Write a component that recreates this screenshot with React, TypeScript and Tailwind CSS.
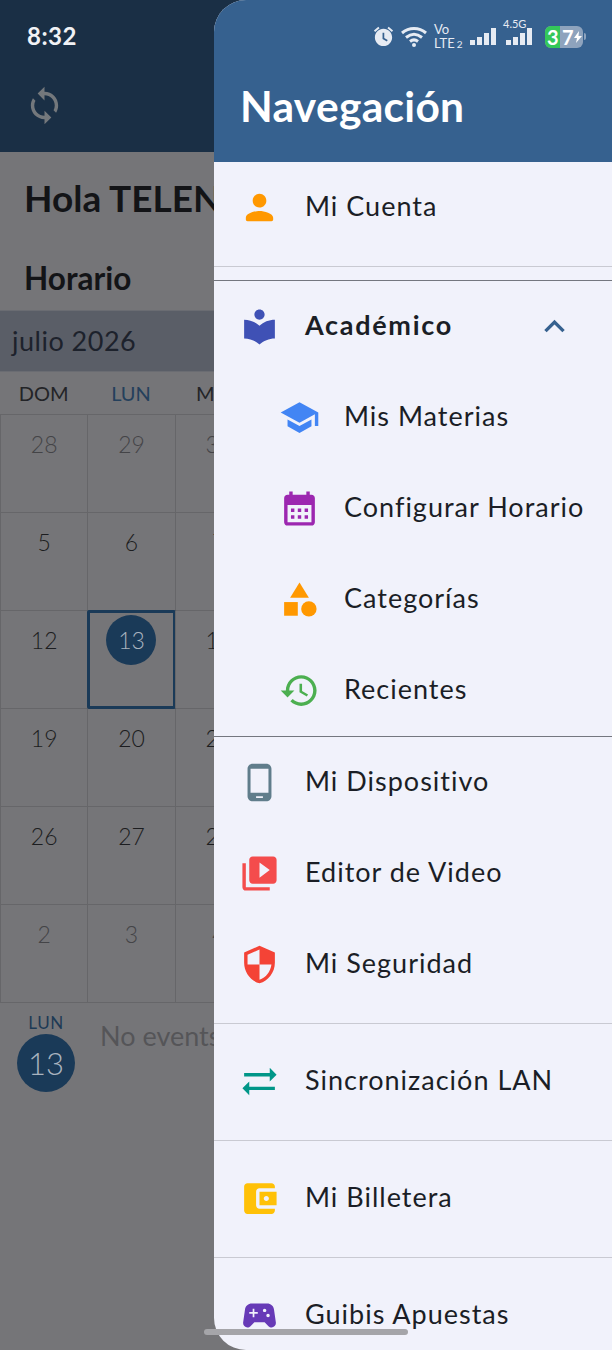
import React from "react";

const FONT = "font-['Lato','Liberation_Sans',sans-serif]";

const Icon = ({ d, color, size = 41, children }: { d?: string; color: string; size?: number; children?: React.ReactNode }) => (
  <svg width={size} height={size} viewBox="0 0 24 24" fill={color} className="shrink-0">
    {d && <path d={d} />}
    {children}
  </svg>
);

const paths = {
  person: "M12 12c2.21 0 4-1.79 4-4s-1.79-4-4-4-4 1.79-4 4 1.79 4 4 4zm0 2c-2.67 0-8 1.34-8 4v1c0 .55.45 1 1 1h14c.55 0 1-.45 1-1v-1c0-2.66-5.33-4-8-4z",
  library: "M12 11.55C9.64 9.35 6.48 8 3 8v11c3.48 0 6.64 1.35 9 3.55 2.36-2.19 5.52-3.55 9-3.55V8c-3.48 0-6.64 1.35-9 3.55zM12 8c1.66 0 3-1.34 3-3s-1.34-3-3-3-3 1.34-3 3 1.34 3 3 3z",
  school: "M5 13.18v4L12 21l7-3.82v-4L12 17l-7-3.82zM12 3L1 9l11 6 9-4.91V17h2V9L12 3z",
  calendar: "M19 4h-1V2h-2v2H8V2H6v2H5c-1.11 0-1.99.9-1.99 2L3 20c0 1.1.89 2 2 2h14c1.1 0 2-.9 2-2V6c0-1.1-.9-2-2-2zm0 16H5V10h14v10zM9 14H7v-2h2v2zm4 0h-2v-2h2v2zm4 0h-2v-2h2v2zm-8 4H7v-2h2v2zm4 0h-2v-2h2v2zm4 0h-2v-2h2v2z",
  history: "M13 3c-4.97 0-9 4.03-9 9H1l3.89 3.89.07.14L9 12H6c0-3.87 3.13-7 7-7s7 3.13 7 7-3.13 7-7 7c-1.93 0-3.68-.79-4.94-2.06l-1.42 1.42C8.27 19.99 10.51 21 13 21c4.97 0 9-4.03 9-9s-4.03-9-9-9zm-1 5v5l4.28 2.54.72-1.21-3.5-2.08V8H12z",
  phone: "M16 1H8C6.34 1 5 2.34 5 4v16c0 1.66 1.34 3 3 3h8c1.66 0 3-1.34 3-3V4c0-1.66-1.34-3-3-3zm-2 20h-4v-1h4v1zm3.25-3H6.75V4h10.5v14z",
  video: "M4 6H2v14c0 1.1.9 2 2 2h14v-2H4V6zm16-4H8c-1.1 0-2 .9-2 2v12c0 1.1.9 2 2 2h12c1.1 0 2-.9 2-2V4c0-1.1-.9-2-2-2zm-8 12.5v-9l6 4.5-6 4.5z",
  security: "M12 1L3 5v6c0 5.55 3.84 10.74 9 12 5.16-1.26 9-6.45 9-12V5l-9-4zm0 10.99h7c-.53 4.12-3.28 7.79-7 8.94V12H5V6.3l7-3.11v8.8z",
  syncAlt: "M22 8l-4-4v3H3v2h15v3zM2 16l4 4v-3h15v-2H6v-3z",
  wallet: "M21 18v1c0 1.1-.9 2-2 2H5c-1.11 0-2-.9-2-2V5c0-1.1.89-2 2-2h14c1.1 0 2 .9 2 2v1h-9c-1.11 0-2 .9-2 2v8c0 1.1.89 2 2 2h9zm-9-2h10V8H12v8zm4-2.5c-.83 0-1.5-.67-1.5-1.5s.67-1.5 1.5-1.5 1.5.67 1.5 1.5-.67 1.5-1.5 1.5z",
  games: "M21.58 16.09l-1.09-7.66C20.21 6.46 18.52 5 16.53 5H7.47C5.48 5 3.79 6.46 3.51 8.43l-1.09 7.66C2.2 17.63 3.39 19 4.94 19c.68 0 1.32-.27 1.8-.75L9 16h6l2.25 2.25c.48.48 1.13.75 1.8.75 1.56 0 2.75-1.37 2.53-2.91zM11 11H9v2H8v-2H6v-1h2V8h1v2h2v1zm4-1c-.55 0-1-.45-1-1s.45-1 1-1 1 .45 1 1-.45 1-1 1zm2 3c-.55 0-1-.45-1-1s.45-1 1-1 1 .45 1 1-.45 1-1 1z",
  sync: "M12 4V1L8 5l4 4V6c3.31 0 6 2.69 6 6 0 1.01-.25 1.97-.7 2.8l1.46 1.46C19.54 15.03 20 13.57 20 12c0-4.42-3.58-8-8-8zm0 14c-3.31 0-6-2.69-6-6 0-1.01.25-1.97.7-2.8L5.24 7.74C4.46 8.97 4 10.43 4 12c0 4.42 3.58 8 8 8v3l4-4-4-4v3z",
  chevron: "M12 8l-6 6 1.41 1.41L12 10.83l4.59 4.58L18 14z",
};

const weeks = [
  [28, 29, 30],
  [5, 6, 7],
  [12, 13, 14],
  [19, 20, 21],
  [26, 27, 28],
  [2, 3, 4],
];

const MenuRow = ({ icon, label, sub, bold }: { icon: React.ReactNode; label: string; sub?: boolean; bold?: boolean }) => (
  <div className={`flex h-[91px] items-center ${sub ? "pl-[65px]" : "pl-[25px]"}`}>
    <div className="flex w-[41px] justify-center">{icon}</div>
    <span
      className={`${sub ? "ml-[24px]" : "ml-[25px]"} -translate-y-px text-[27px] text-[#1b1e26] ${
        bold ? "font-bold tracking-[1.7px]" : "tracking-[1px]"
      }`}
    >
      {label}
    </span>
  </div>
);

const Divider = () => <div className="mb-3 mt-[13px] h-px bg-[#c9cad2]" />;

const Bars = () => (
  <svg width="30" height="19" viewBox="0 0 30 19" fill="#e6ebf3">
    <rect x="0" y="13" width="5" height="5" />
    <rect x="7" y="10" width="5" height="8" />
    <rect x="14" y="6" width="5" height="12" />
    <rect x="21" y="1" width="5" height="17" />
  </svg>
);

const StatusBar = () => (
  <div className="absolute left-[158px] top-[22px] flex items-center text-[#e6ebf3]">
    <svg width="23" height="23" viewBox="0 0 24 24" fill="#e6ebf3">
      <path d="M22 5.72l-4.6-3.86-1.29 1.53 4.6 3.86L22 5.72zM7.88 3.39L6.6 1.86 2 5.71l1.29 1.53 4.59-3.85zM12 4c-4.97 0-9 4.03-9 9s4.03 9 9 9 9-4.03 9-9-4.03-9-9-9zm3.5 13.2L11 14.5V8h1.8v5.5l3.6 2.1-.9 1.6z" />
    </svg>
    <svg width="28" height="22" viewBox="0 0 28 22" fill="none" stroke="#e6ebf3" strokeWidth="3" className="ml-[5px]">
      <path d="M2 7c7-6 17-6 24 0M6 11.500c5-4 11-4 16 0M10 15.500c2.500-2 5.500-2 8 0" />
      <circle cx="14" cy="19" r="2" fill="#e6ebf3" stroke="none" />
    </svg>
    <div className="ml-[6px] flex w-[30px] flex-col text-[13px] leading-[14px]">
      <span>Vo</span>
      <span className="flex items-baseline whitespace-nowrap">LTE<span className="ml-[2px] text-[10px]">2</span></span>
    </div>
    <div className="ml-[6px]"><Bars /></div>
    <div className="relative ml-[6px] w-[30px]">
      <span className="absolute left-[-3px] top-[-9px] text-[11px] leading-[11px]">4.5G</span>
      <Bars />
    </div>
    <div className="ml-[9px] flex h-[22px] w-[38px] overflow-hidden rounded-[6px] bg-[#8ea3bd] text-[20px] font-bold leading-[22px] text-white">
      <span className="w-[15px] bg-[#34c759] pl-[2px]">3</span>
      <span className="pl-[2px]">7</span>
      <svg width="8" height="12" viewBox="0 0 8 12" fill="#fff" className="mt-[5px]">
        <path d="M5 0L0 7h3l-1 5 6-7H4.500z" />
      </svg>
    </div>
    <div className="ml-px h-[7px] w-[2px] rounded-r-sm bg-[#8ea3bd]" />
  </div>
);

const Drawer = () => (
  <aside className="absolute bottom-0 left-[214px] right-0 top-0 overflow-hidden rounded-l-[32px] bg-[#f1f2fb]">
    <header className="relative flex h-[162px] items-center bg-[#36618f] pl-[26px] pt-[51px]">
      <StatusBar />
      <h1 className="text-[42.5px] font-bold leading-none tracking-[0.3px] text-white">Navegación</h1>
    </header>

    <MenuRow label="Mi Cuenta" icon={<Icon d={paths.person} color="#ff9800" />} />
    <div className="mt-[13px] h-px bg-[#c9cad2]" />

    <div className="mt-[13px] border-y border-[#74777f]">
      <div className="relative">
        <MenuRow bold label="Académico" icon={<Icon d={paths.library} color="#3f51b5" />} />
        <div className="absolute right-[37px] top-[25px]">
          <Icon d={paths.chevron} color="#36618f" size={41} />
        </div>
      </div>
      <MenuRow sub label="Mis Materias" icon={<Icon d={paths.school} color="#4285f4" />} />
      <MenuRow sub label="Configurar Horario" icon={<Icon d={paths.calendar} color="#9c27b0" />} />
      <MenuRow
        sub
        label="Categorías"
        icon={
          <Icon d="M12 2l-5.500 9h11z" color="#ff9800">
            <circle cx="17.500" cy="17.500" r="4.500" />
            <rect x="3" y="13.500" width="8" height="8" />
          </Icon>
        }
      />
      <MenuRow sub label="Recientes" icon={<Icon d={paths.history} color="#4caf50" />} />
    </div>

    <MenuRow label="Mi Dispositivo" icon={<Icon d={paths.phone} color="#607d8b" />} />
    <MenuRow label="Editor de Video" icon={<Icon d={paths.video} color="#f44c4c" />} />
    <MenuRow label="Mi Seguridad" icon={<Icon d={paths.security} color="#f44336" />} />
    <Divider />
    <MenuRow label="Sincronización LAN" icon={<Icon d={paths.syncAlt} color="#009688" />} />
    <Divider />
    <MenuRow label="Mi Billetera" icon={<Icon d={paths.wallet} color="#ffc107" />} />
    <Divider />
    <MenuRow label="Guibis Apuestas" icon={<Icon d={paths.games} color="#673ab7" />} />
  </aside>
);

const Calendar = () => (
  <div className="w-[612px]">
    <div className="mt-[14px] flex h-[62px] items-center border-y border-[#6a6c72] bg-[#5a5e67] pl-[12px] text-[27px] tracking-[0.5px] text-[#1d222c]">
      julio 2026
    </div>
    <div className="grid h-[42px] w-[262px] grid-cols-3 items-center text-center text-[20px] text-[#232427]">
      <span>DOM</span>
      <span className="text-[#24405c]">LUN</span>
      <span>MAR</span>
    </div>
    <div className="border-t border-[#666669]">
      {weeks.map((week, w) => (
        <div key={w} className="grid h-[98px] w-[262px] grid-cols-3 border-b border-[#666669]">
          {week.map((day, i) => {
            const faded = w === 0 || w === 5;
            const today = day === 13;
            return (
              <div key={i} className="relative border-l border-[#666669] pt-[9px] text-center text-[23px] font-light leading-[40px]">
                {today ? (
                  <div className="absolute -bottom-px -left-px -right-px -top-px rounded-[2px] border-[3px] border-[#1a3a58] pt-[2px]">
                    <div className="mx-auto flex h-[50px] w-[50px] items-center justify-center rounded-full bg-[#1a3a58] text-[#a9b3bf]">13</div>
                  </div>
                ) : (
                  <span className={faded ? "text-[#444447]" : "text-[#1c1d20]"}>{day}</span>
                )}
              </div>
            );
          })}
        </div>
      ))}
    </div>
  </div>
);

export default function App() {
  return (
    <div className={`relative h-[1350px] w-[612px] overflow-hidden bg-[#757578] ${FONT}`}>
      <div className="flex h-[152px] flex-col bg-[#1a2f45] pl-[27px]">
        <span className="mt-[21px] text-[24px] font-bold leading-[30px] tracking-[0.5px] text-[#f1f2f5]">8:32</span>
        <div className="ml-[-3px] mt-[34px]">
          <Icon d={paths.sync} color="#74787c" />
        </div>
      </div>

      <div className="pl-[24px] pt-[24px] text-[#131417]">
        <h2 className="whitespace-nowrap text-[37px] font-bold leading-[44px]">Hola TELEN</h2>
        <h3 className="mt-[40px] text-[31.5px] font-bold leading-[36px]">Horario</h3>
      </div>

      <Calendar />

      <div className="flex pl-[17px] pt-[9px]">
        <div className="flex w-[58px] flex-col items-center">
          <span className="text-[17px] leading-[22px] tracking-[0.5px] text-[#1d3a55]">LUN</span>
          <div className="flex h-[58px] w-[58px] items-center justify-center rounded-full bg-[#1a3a58] text-[31px] font-light text-[#a9b3bf]">13</div>
        </div>
        <span className="ml-[25px] mt-[8px] whitespace-nowrap text-[27px] leading-[32px] text-[#555558]">No events</span>
      </div>

      <Drawer />

      <div className="absolute bottom-[15px] left-[204px] h-[6px] w-[204px] rounded-full bg-[#a5a5a9]" />
    </div>
  );
}
